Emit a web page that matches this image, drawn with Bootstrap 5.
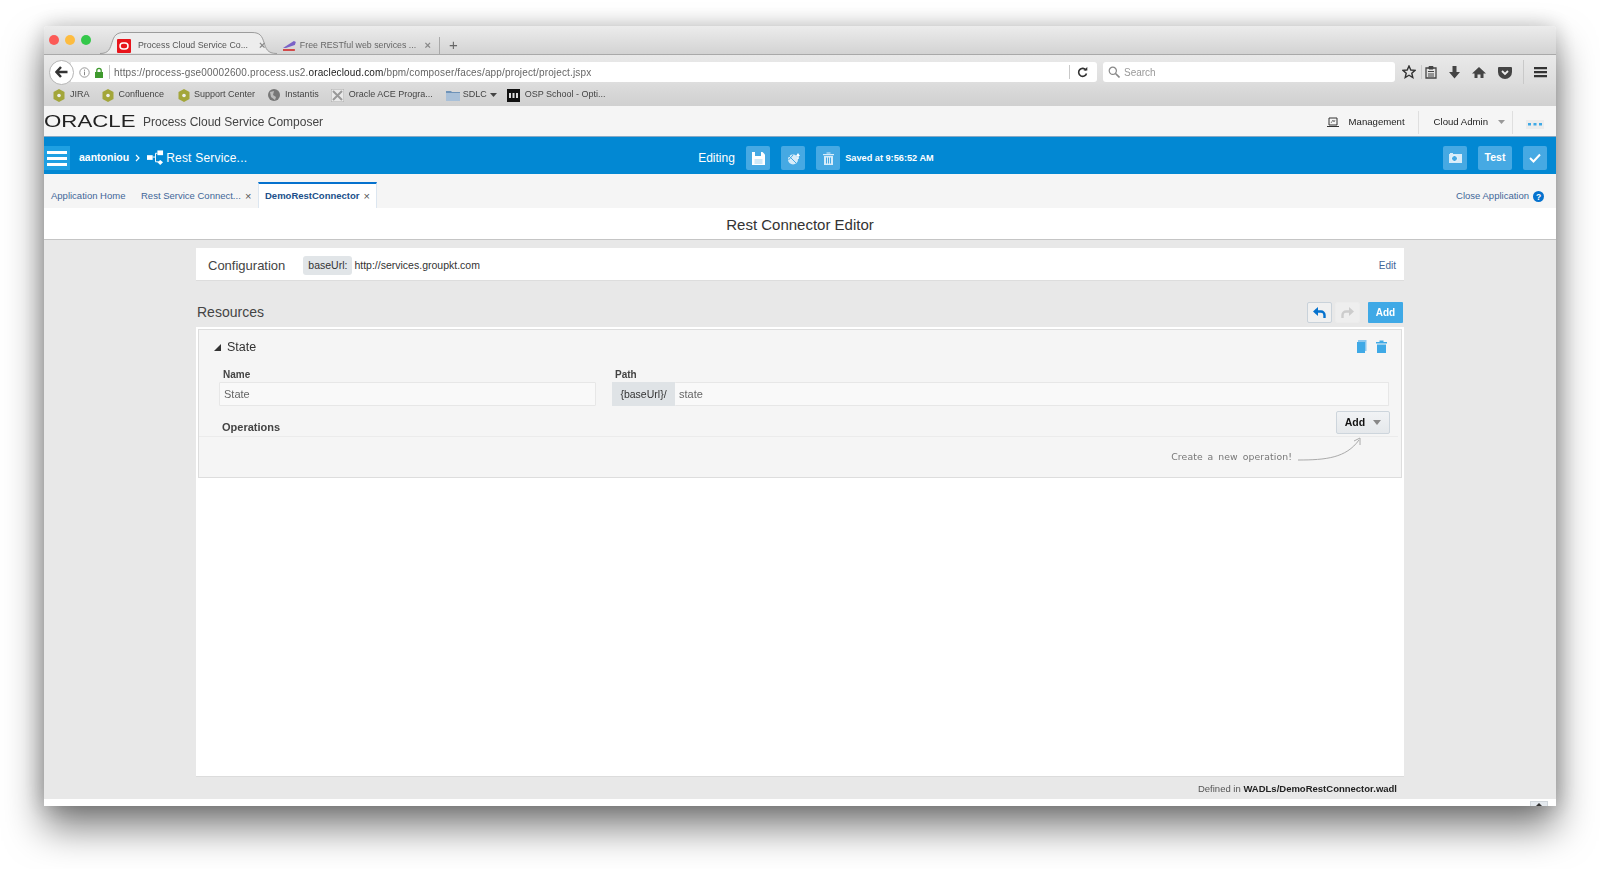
<!DOCTYPE html>
<html lang="en"><head><meta charset="utf-8"><title>Process Cloud Service Composer</title>
<link rel="stylesheet" href="https://cdn.jsdelivr.net/npm/bootstrap@5.3.0/dist/css/bootstrap.min.css">
<style>
html,body{height:869px;overflow:hidden;background:#fff}
body{font-family:"Liberation Sans",Arial,sans-serif;font-size:10px;color:#333;padding:26px 44px 0}
.win{width:1512px;height:780px;background:#fff;box-shadow:0 22px 38px rgba(0,0,0,.5),0 0 22px rgba(0,0,0,.22);border-radius:4px 4px 0 0;overflow:hidden;display:flex;flex-direction:column;filter:blur(.3px)}
.strip{height:29px;flex:none;background:linear-gradient(#ececec,#d3d3d3);border-bottom:1px solid #a9a9a9;padding-left:5px}
.dot{width:10px;height:10px;border-radius:50%;margin-right:6px;flex:none}
.ft{height:22px;position:relative;color:#666;font-size:8.8px;flex:none;padding-top:5px}
.ft>svg.bgs{position:absolute;left:0;top:0}
.ft>*:not(.bgs){position:relative}
.active-t{width:177px;margin-left:3px;padding-left:17px}
.other-t{width:163px;padding-left:5px}
.tx{margin-left:7px;white-space:nowrap;width:112px}
.clz{color:#888;font-size:11px;margin-left:9px;font-weight:700}
.tool{height:29px;flex:none;background:linear-gradient(#e9e9e9,#dddddd);padding:5px 0 0 5px}
.bck{width:25px;height:25px;border-radius:50%;background:#fff;border:1px solid #b5b5b5;z-index:2;flex:none}
.urlb{width:1026px;height:20px;background:#fff;border-radius:0 3px 3px 0;margin-left:-3px;padding-left:8px;font-size:10px;color:#666;letter-spacing:.15px;flex:none}
.urlb b{font-weight:400;color:#222}
.sep-a{width:1px;height:14px;background:#c9c9c9;flex:none}
.sep-t{height:18px;background:#a9a9a9}
.srch{width:292px;height:20px;background:#fff;border-radius:3px;margin-left:6px;padding-left:5px;color:#999;font-size:10px;flex:none}
.bm{height:22px;flex:none;background:linear-gradient(#dcdcdc,#d0d0d0);padding-left:9px;font-size:9px;color:#444}
.bm span{margin-left:5px;white-space:nowrap}
.apphd{height:31px;flex:none;background:#f5f5f5;border-bottom:1px solid #86a9c5}
.orc{font-size:17px;line-height:1;color:#222;width:90px;transform-origin:left center;transform:scaleX(1.31);white-space:nowrap;font-weight:400}
.pcs{margin:2px 0 0 9px;font-size:12px;color:#444;white-space:nowrap}
.rsd{font-size:9.6px;color:#222;margin-top:2px}
.sep-b{width:1px;height:23px;background:#dfdfdf;flex:none}
.bluebar{height:37px;flex:none;background:#0288d3;color:#fff;padding-top:5px}
.burg{width:26px;height:24px;background:#1fa0e2;display:flex;flex-direction:column;justify-content:center;gap:3px;padding:0 3px}
.burg i{display:block;height:3px;background:#fff}
.sqb{height:24px;width:24px;background:#46a9e3;border-radius:2px;border:0;padding:0;color:#fff;flex:none}
.tabsrow{height:34px;flex:none;background:#f5f5f5;color:#3f6698;padding-left:7px;font-size:9.5px}
.tabsrow .tb{margin-top:11px;white-space:nowrap}
.acttab{height:26px;width:119px;background:#fff;border-top:2px solid #0572ce;border-left:1px solid #dce6f0;border-right:1px solid #dce6f0;color:#20508a;font-weight:700;padding-left:6px;white-space:nowrap}
.xs{color:#555;font-size:11px;font-weight:400}
.ttl{height:32px;flex:none;background:#fff;border-bottom:1px solid #c5c5c5;font-size:15px;color:#333;text-align:center;line-height:34px}
.main{flex:1 1 auto;background:#e8e8e8;padding:8px 152px 0;display:flex;flex-direction:column;min-height:0}
.cfg{height:33px;background:#fff;border-bottom:1px solid #ddd;padding:3px 8px 0 12px;flex:none}
.pill{background:#e1e5e8;border-radius:3px;height:19px;padding:0 5px;margin:0 2px 0 18px;line-height:19px;font-size:10.5px}
.resh{height:46px;flex:none;padding:0 1px;align-items:center}
.resh h2{font-size:14px;font-weight:400;margin:17px 0 0;color:#444}
.ub{width:25px;height:21px;padding:0;border-radius:2px;border:1px solid #c9d2da;background:#f0f0f0;margin-top:17px}
.ub2{background:#eeeeee;border-color:#ececec;margin-left:3px}
.addb{width:35px;height:21px;padding:0;background:#3fa9e6;color:#fff;font-weight:700;font-size:10px;border:0;border-radius:1px;margin-left:8px;margin-top:17px}
.panel{height:450px;background:#fff;border-bottom:1px solid #dcdcdc;padding:2px;flex:none}
.inner{height:149px;background:#f5f5f5;border:1px solid #ddd;position:relative}
.sthd{height:35px;padding:0 14px 0 15px;font-size:12.5px;color:#333}
.sthd .ic{margin-bottom:2px}
.lbl{font-weight:700;font-size:10px;color:#444;line-height:12px;margin:4px 0 1px 4px}
.fc{height:24px;border:1px solid #e7e7e7;border-radius:1px;background:#f9f9f9;font-size:11px;color:#666;padding:0 4px;line-height:22px}
.pre{height:24px;width:63px;background:#dfe3e6;color:#333;font-size:10.5px;text-align:center;line-height:24px;flex:none}
.opr{margin-top:5px;height:26px;padding:0 8px 2px 23px;border-bottom:1px solid #ebebeb;margin-right:3px;align-items:flex-end}
.opr strong{font-size:11px;color:#444;line-height:12px;margin-bottom:1px}
.opadd{width:54px;height:23px;padding:0;background:linear-gradient(#f1f3f5,#e5e8eb);border:1px solid #cdd5dc;border-radius:2px;font-size:10.5px;font-weight:700;color:#111}
.hnt{font-size:9.3px;color:#777;letter-spacing:.1px;word-spacing:1.8px;font-family:"DejaVu Sans",sans-serif}
.hntw{padding-right:38px;height:39px}
.foot{height:24px;flex:none;text-align:right;padding:5px 7px 0 0;font-size:9.5px;color:#555}
.foot b{color:#222}
.btmw{height:7px;flex:none;background:#fff;position:relative}
.scr{position:absolute;right:8px;top:2px;width:18px;height:5px;background:#e4e9ee;border:1px solid #cfd5da;border-bottom:0;display:flex;justify-content:center;padding-top:1px}
</style></head><body>
<div class="win">
 <div class="strip d-flex align-items-end">
  <div class="d-flex align-self-center"><div class="dot" style="background:#fc5b57"></div><div class="dot" style="background:#fdbc40"></div><div class="dot" style="background:#34c84a"></div></div>
  <div class="ft active-t d-flex align-items-center">
   <svg class="bgs" width="177" height="22"><path d="M0 21.500c9 0 10-5 12-11C14 4 16 .5 24 .5h128c8 0 10 3.500 12 10 2 6 3 11 13 11" fill="#ededed" stroke="#9c9c9c"/></svg>
   <svg width="14" height="14"><rect width="14" height="14" rx="1" fill="#e8141b"/><rect x="3" y="4" width="8" height="6" rx="3" fill="none" stroke="#fff" stroke-width="1.500"/></svg>
   <div class="tx" style="color:#555">Process Cloud Service Co...</div><span class="clz">×</span>
  </div>
  <div class="ft other-t d-flex align-items-center">
   <svg width="15" height="13" viewBox="0 0 15 13"><path d="M1 9 12 2l2 1-1 3-9 3z" fill="#7a62c7"/><path d="M1 10h12v2H1z" fill="#d24a4a"/></svg>
   <div class="tx" style="margin-left:3px;width:118px">Free RESTful web services ...</div><span class="clz" style="margin-left:8px">×</span>
   <div class="sep-a sep-t ms-2"></div>
  </div>
  <div class="ft d-flex align-items-center" style="font-size:15px;margin-left:9px">+</div>
 </div>
 <div class="tool d-flex align-items-center">
  <div class="bck d-flex align-items-center justify-content-center"><svg width="13" height="12" viewBox="0 0 13 12"><path d="M6 1 1.500 6 6 11M2 6h10.500" fill="none" stroke="#333" stroke-width="2.400"/></svg></div>
  <div class="urlb d-flex align-items-center">
   <svg width="11" height="11" viewBox="0 0 11 11" class="me-1"><circle cx="5.500" cy="5.500" r="4.700" fill="none" stroke="#999"/><path d="M5.500 4.600v3.600M5.500 2.600v1.200" stroke="#888"/></svg>
   <svg width="10" height="11" viewBox="0 0 10 11"><rect x="1" y="5" width="8" height="6" fill="#3f9a2e"/><path d="M2.800 5V3.500a2.200 2.200 0 0 1 4.400 0V5" fill="none" stroke="#3f9a2e" stroke-width="1.300"/></svg>
   <div class="sep-a" style="margin:0 4px 0 5px"></div>
   <div class="text-nowrap" style="width:955px">https://process-gse00002600.process.us2.<b>oraclecloud.com</b>/bpm/composer/faces/app/project/project.jspx</div>
   <div class="sep-a"></div>
   <svg width="11" height="11" viewBox="0 0 11 11" style="margin-left:7px"><path d="M9 3.200A4 4 0 1 0 9.500 6.500" fill="none" stroke="#333" stroke-width="1.600"/><path d="M6.500 3.600h3.800V0z" fill="#333"/></svg>
  </div>
  <div class="srch d-flex align-items-center"><svg width="12" height="12" viewBox="0 0 12 12" class="me-1"><circle cx="4.800" cy="4.800" r="3.600" fill="none" stroke="#888" stroke-width="1.200"/><path d="m7.500 7.500 4 4" stroke="#888" stroke-width="1.600"/></svg>Search</div>
  <div class="d-flex align-items-center" style="margin-left:7px">
   <svg width="14" height="14" viewBox="0 0 14 14"><path d="m7 1 1.800 4 4.200.4-3.200 2.800 1 4.300L7 10.200 3.200 12.500l1-4.300L1 5.400 5.200 5z" fill="none" stroke="#333" stroke-width="1.400"/></svg>
   <div class="sep-a" style="margin:0 3px 0 5px"></div>
   <svg width="12" height="14" viewBox="0 0 12 14"><path d="M1 3h10v10H1z" fill="none" stroke="#444" stroke-width="1.300"/><path d="M4 1.500h4V4H4zM3 6.500h6M3 9h6M3 11h6" stroke="#444" fill="#444"/></svg>
   <svg width="13" height="14" viewBox="0 0 13 14" style="margin-left:11px"><path d="M4.500 1h4v6H12l-5.500 6.500L1 7h3.500z" fill="#444"/></svg>
   <svg width="14" height="13" viewBox="0 0 14 13" style="margin-left:11px"><path d="M7 1 0 7.500h2.500V12h3V8.500h3V12h3V7.500H14z" fill="#444"/></svg>
   <svg width="14" height="13" viewBox="0 0 14 13" style="margin-left:12px"><path d="M1 1h12a1 1 0 0 1 1 1v4a7 7 0 0 1-14 0V2a1 1 0 0 1 1-1z" fill="#444"/><path d="m4 5 3 3 3-3" fill="none" stroke="#eee" stroke-width="1.800"/></svg>
   <div class="sep-a" style="margin:0 10px 0 11px;height:24px"></div>
   <svg width="13" height="12" viewBox="0 0 13 12"><path d="M0 1h13v2.200H0zM0 5h13v2.200H0zM0 9h13v2.200H0z" fill="#333"/></svg>
  </div>
 </div>
 <div class="bm d-flex align-items-center">
  <svg width="12" height="13" viewBox="0 0 12 13"><path d="M6 0 11.500 3v7L6 13 .5 10V3z" fill="#a3a63a"/><circle cx="6" cy="6.500" r="1.800" fill="#eee"/></svg><span style="margin-right:12px">JIRA</span>
  <svg width="12" height="13" viewBox="0 0 12 13"><path d="M6 0 11.500 3v7L6 13 .5 10V3z" fill="#a3a63a"/><circle cx="6" cy="6.500" r="1.800" fill="#eee"/></svg><span style="margin-right:14px">Confluence</span>
  <svg width="12" height="13" viewBox="0 0 12 13"><path d="M6 0 11.500 3v7L6 13 .5 10V3z" fill="#a3a63a"/><circle cx="6" cy="6.500" r="1.800" fill="#eee"/></svg><span style="margin:0 13px 0 4px">Support Center</span>
  <svg width="12" height="12" viewBox="0 0 12 12"><circle cx="6" cy="6" r="6" fill="#777"/><path d="M2 3 6 2 5 6 8 8 7 11 3 8z" fill="#bbb"/></svg><span style="margin-right:12px">Instantis</span>
  <svg width="13" height="13" viewBox="0 0 13 13"><rect width="13" height="13" fill="#e9e9e9" stroke="#aaa"/><path d="m2 2 9 9M11 2l-9 9" stroke="#999" stroke-width="2"/></svg><span style="margin-right:13px">Oracle ACE Progra...</span>
  <svg width="14" height="12" viewBox="0 0 14 12"><path d="M0 2h5l1 1h8v9H0z" fill="#6f93b8"/><path d="M0 4h14v8H0z" fill="#a9c0d8"/></svg><span style="margin:0 3px">SDLC</span>
  <svg width="7" height="4" viewBox="0 0 7 4" style="margin-right:10px"><path d="M0 0h7L3.500 4z" fill="#444"/></svg>
  <svg width="13" height="13" viewBox="0 0 13 13"><rect width="13" height="13" fill="#111"/><path d="M2 4h2v5H2zM5.500 4h2v5h-2zM9 4h2v5H9z" fill="#ddd"/></svg><span>OSP School - Opti...</span>
 </div>
 <div class="apphd d-flex align-items-center">
  <div class="orc">ORACLE</div>
  <div class="pcs">Process Cloud Service Composer</div>
  <div class="ms-auto d-flex align-items-center rsd">
   <svg width="12" height="11" viewBox="0 0 12 11"><path d="M2 1h8v7H2zM0 9.500h12" fill="none" stroke="#333"/><path d="m4 6 2-3 1 2 1-2" fill="none" stroke="#555" stroke-width=".7"/></svg>
   <span style="margin:0 13px 0 10px">Management</span>
   <div class="sep-b"></div>
   <span style="margin:0 10px 0 15px">Cloud Admin</span>
   <svg width="7" height="4" viewBox="0 0 7 4"><path d="M0 0h7L3.500 4z" fill="#999"/></svg>
   <div class="sep-b" style="margin:0 13px 0 7px"></div>
   <div style="width:18px;height:9px;background:#ececec;margin:4px 12px 0 0;line-height:0" class="d-flex align-items-center justify-content-center gap-1"><svg width="14" height="3" viewBox="0 0 14 3"><path d="M0 0h3v2.500H0zM5.500 0h3v2.500h-3zM11 0h3v2.500h-3z" fill="#3fa9e6"/></svg></div>
  </div>
 </div>
 <div class="bluebar d-flex align-items-center">
  <div class="burg"><i></i><i></i><i></i></div>
  <b style="margin-left:9px;font-size:10.500px">aantoniou</b>
  <svg width="6" height="8" viewBox="0 0 6 8" style="margin-left:6px"><path d="m1 1 3 3-3 3" fill="none" stroke="#fff" stroke-width="1.200"/></svg>
  <svg width="17" height="16" viewBox="0 0 18 16" style="margin-left:6px"><rect x="11" y="0" width="6" height="5" fill="#fff"/><rect x="0" y="5" width="6" height="5" fill="#fff"/><path d="M11 12.500l3-2.500 3 2.500-3 3z" fill="#fff"/><path d="M6 7h3V3h2M9 7v5h3" fill="none" stroke="#fff"/></svg>
  <span style="margin-left:2px;font-size:12px;letter-spacing:.2px;width:532px">Rest Service...</span>
  <span style="font-size:12px;width:48px">Editing</span>
  <button class="sqb btn d-flex align-items-center justify-content-center"><svg width="13" height="13" viewBox="0 0 13 13"><path d="M0 0h10.500L13 2.500V13H0z" fill="#fff"/><path d="M3 0h6v4H3z" fill="#46a9e3"/><path d="M2.500 7h8v5h-8z" fill="#cfe9f8"/></svg></button>
  <button class="sqb btn d-flex align-items-center justify-content-center" style="margin-left:11px"><svg width="13" height="13" viewBox="0 0 13 13"><circle cx="6" cy="7.500" r="5" fill="#d7ecf9"/><path d="M2 4 9 11M1.500 8 6 3" stroke="#46a9e3"/><path d="M11 1 13 4h-1.300v3h-1.400V4H9z" fill="#fff"/></svg></button>
  <button class="sqb btn d-flex align-items-center justify-content-center" style="margin-left:11px"><svg width="11" height="13" viewBox="0 0 11 13"><path d="M3.500 1.500V.5h4v1M0 2h11v1.300H0zM1 4h9v9H1z" fill="#d7ecf9"/><path d="M3.500 5.500v6M5.500 5.500v6M7.500 5.500v6" stroke="#46a9e3"/></svg></button>
  <b style="margin:1px 0 0 5px;font-size:9.200px;white-space:nowrap">Saved at 9:56:52 AM</b>
  <div class="ms-auto d-flex" style="padding-right:9px">
   <button class="sqb btn d-flex align-items-center justify-content-center"><svg width="13" height="10" viewBox="0 0 13 10"><rect y="1" width="13" height="9" fill="#d7ecf9"/><circle cx="5.500" cy="5.500" r="3" fill="#46a9e3" stroke="#fff"/><rect x="1" width="3" height="1.500" fill="#d7ecf9"/></svg></button>
   <button class="sqb btn fw-bold" style="width:34px;font-size:10.500px;margin-left:11px">Test</button>
   <button class="sqb btn d-flex align-items-center justify-content-center" style="margin-left:11px"><svg width="12" height="10" viewBox="0 0 12 10"><path d="m1 5 3.500 3.500L11 1.500" fill="none" stroke="#fff" stroke-width="2"/></svg></button>
  </div>
 </div>
 <div class="tabsrow d-flex align-items-end">
  <div class="align-self-center tb" style="width:90px">Application Home</div>
  <div class="align-self-center tb" style="width:104px">Rest Service Connect...</div>
  <div class="align-self-center tb xs" style="width:13px">×</div>
  <div class="acttab d-flex align-items-center">DemoRestConnector<span class="xs" style="margin-left:4px">×</span></div>
  <div class="ms-auto align-self-center tb d-flex align-items-center" style="padding-right:12px;margin-top:10px">Close Application<svg width="11" height="11" viewBox="0 0 11 11" style="margin-left:4px"><circle cx="5.500" cy="5.500" r="5.500" fill="#0572ce"/><text x="5.500" y="8.500" text-anchor="middle" font-size="8.500" font-weight="700" fill="#fff" font-family="Liberation Sans">?</text></svg></div>
 </div>
 <div class="ttl">Rest Connector Editor</div>
 <div class="main">
  <div class="cfg d-flex align-items-center">
   <span style="font-size:13px;color:#444">Configuration</span>
   <span class="pill">baseUrl:</span>
   <span style="font-size:10.500px">http://services.groupkt.com</span>
   <a class="ms-auto text-decoration-none" style="color:#3f6698" href="#">Edit</a>
  </div>
  <div class="resh d-flex">
   <h2>Resources</h2>
   <button class="ub btn ms-auto d-flex align-items-center justify-content-center"><svg width="13" height="12" viewBox="0 0 13 12"><path d="M5 0v9L0 4.500z" fill="#0572ce"/><path d="M4 4.500h4a3.500 3.500 0 0 1 3.500 3.500v3" fill="none" stroke="#0572ce" stroke-width="2.400"/></svg></button>
   <button class="ub ub2 btn d-flex align-items-center justify-content-center"><svg width="13" height="12" viewBox="0 0 13 12"><path d="M8 0v9l5-4.500z" fill="#ccc"/><path d="M9 4.500H5A3.500 3.500 0 0 0 1.500 8v3" fill="none" stroke="#ccc" stroke-width="2.400"/></svg></button>
   <button class="addb btn">Add</button>
  </div>
  <div class="panel">
   <div class="inner">
    <div class="sthd d-flex align-items-center">
     <svg width="7" height="7" viewBox="0 0 7 7"><path d="M7 0v7H0z" fill="#333"/></svg>
     <span style="margin-left:6px">State</span>
     <svg class="ms-auto ic" width="11" height="13" viewBox="0 0 11 13"><path d="M2 2V0h8.500v11H9V2z" fill="#8cc8ef"/><path d="M1 2h8v11H1z" fill="#3fa9e6"/></svg>
     <svg class="ic" width="11" height="13" viewBox="0 0 11 13" style="margin-left:9px"><path d="M3.500 2V.5h4V2H11v1.500H0V2zM1 4.500h9V13H1z" fill="#3fa9e6"/></svg>
    </div>
    <div class="d-flex" style="padding:0 12px 0 20px">
     <div style="width:377px"><div class="lbl">Name</div><div class="fc">State</div></div>
     <div class="flex-grow-1" style="margin-left:16px"><div class="lbl" style="margin-left:3px">Path</div><div class="d-flex"><div class="pre">{baseUrl}/</div><div class="fc flex-grow-1" style="border-left:0">state</div></div></div>
    </div>
    <div class="opr d-flex justify-content-between"><strong>Operations</strong><button class="opadd btn d-flex align-items-center justify-content-center gap-2">Add<svg width="8" height="5" viewBox="0 0 8 5"><path d="M0 0h8L4 5z" fill="#888"/></svg></button></div>
    <div class="hntw d-flex justify-content-end align-items-center">
     <span class="hnt">Create a new operation!</span>
     <svg width="68" height="30" viewBox="0 0 68 30" style="margin:-11px 0 0 3px"><path d="M3 24c28 0 48-2 61-20" fill="none" stroke="#aaa"/><path d="m59 5 6-3 0 7" fill="none" stroke="#aaa"/></svg>
    </div>
   </div>
  </div>
  <div class="foot">Defined in <b>WADLs/DemoRestConnector.wadl</b></div>
 </div>
 <div class="btmw"><div class="scr"><svg width="6" height="3" viewBox="0 0 6 3"><path d="M0 3h6L3 0z" fill="#333"/></svg></div></div>
</div>
<script src="https://cdn.jsdelivr.net/npm/bootstrap@5.3.0/dist/js/bootstrap.bundle.min.js"></script>
</body></html>
